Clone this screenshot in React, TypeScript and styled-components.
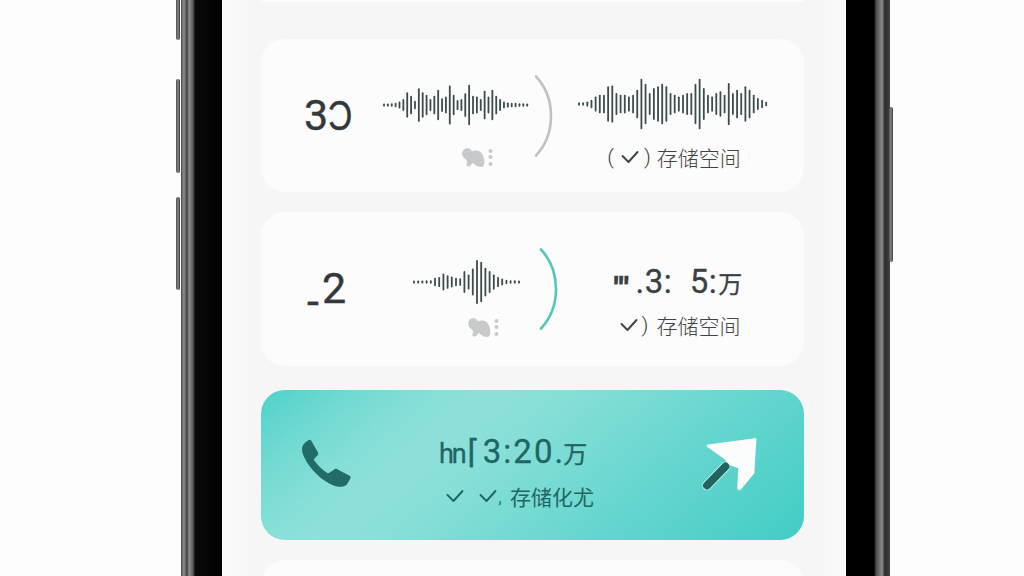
import React from "react";
import styled, { createGlobalStyle } from "styled-components";

const Global = createGlobalStyle`
  html, body { margin: 0; padding: 0; background: #fdfdfd; overflow: hidden; }
  #root { height: 576px; }
`;

const FONT = `Roboto, "Liberation Sans", "Noto Sans CJK SC", sans-serif`;
const CJK = `"Noto Sans CJK SC", "Noto Sans", sans-serif`;

const Page = styled.div`
  height: 576px;
  width: 1024px;
  padding-left: 181px;
  box-sizing: border-box;
  overflow: hidden;
`;

const Phone = styled.div`
  position: relative;
  width: 709px;
  height: 576px;
  box-sizing: border-box;
  padding: 0 44px 0 41px;
  background: linear-gradient(
    90deg,
    #3a3a3a 0,
    #6c6c6c 1px,
    #8c8c8c 3px,
    #3e3e3e 6px,
    #8e8e8e 8px,
    #5c5c5c 12px,
    #0a0a0a 14px,
    #000 40px,
    #000 calc(100% - 16px),
    #4a4a4a calc(100% - 14px),
    #8a8a8a calc(100% - 8px),
    #2a2a2a calc(100% - 5px),
    #444 100%
  );
`;

const SideKey = styled.div<{ $top: number; $h: number; $right?: boolean }>`
  position: absolute;
  top: ${(p) => p.$top}px;
  height: ${(p) => p.$h}px;
  width: 4px;
  ${(p) => (p.$right ? "right: -3px;" : "left: -5px;")}
  background: linear-gradient(90deg, #4a4a4a, #8a8a8a 50%, #333);
  border-radius: 2px;
`;

const Screen = styled.div`
  height: 100%;
  box-sizing: border-box;
  background: linear-gradient(90deg, #fbfbfb 0, #f6f6f7 30px, #f6f6f7 calc(100% - 30px), #fbfbfb 100%);
  padding: 0 42px 0 39px;
  display: flex;
  flex-direction: column;
  overflow: hidden;
`;

const Card = styled.div<{ $h: number; $mt: number; $pl?: number }>`
  flex: none;
  height: ${(p) => p.$h}px;
  margin-top: ${(p) => p.$mt}px;
  padding-left: ${(p) => p.$pl ?? 0}px;
  box-sizing: border-box;
  background: #fcfcfd;
  border-radius: 24px;
  display: flex;
  align-items: center;
`;

const StubCard = styled(Card)`
  border-radius: 0 0 24px 24px;
`;

const CallCard = styled(Card)`
  border-radius: 24px;
  background: linear-gradient(
    140deg,
    #4ed2ca 0%,
    #6fd9d1 12%,
    #86dfd8 24%,
    #8ee0da 32%,
    #88dfd8 42%,
    #78dbd4 55%,
    #62d5ce 72%,
    #42cdc5 100%
  );
`;

const Big = styled.div<{ $w: number }>`
  flex: none;
  width: ${(p) => p.$w}px;
  padding-bottom: 2px;
  font-family: ${FONT};
  font-size: 43px;
  font-weight: 400;
  line-height: 50px;
  color: #33383a;
  white-space: nowrap;
  -webkit-text-stroke: 0.4px #33383a;
`;

const Narrow = styled.span`
  display: inline-block;
  transform: scaleX(0.78);
  transform-origin: left center;
`;

const LowDash = styled.span`
  display: inline-block;
  transform: translateY(13px);
  margin-right: 3px;
`;

const Col = styled.div<{ $w: number; $ml?: number; $mt: number }>`
  flex: none;
  align-self: flex-start;
  width: ${(p) => p.$w}px;
  margin-left: ${(p) => p.$ml ?? 0}px;
  margin-top: ${(p) => p.$mt}px;
  display: flex;
  flex-direction: column;
  align-items: center;
`;

const LeftCol = styled(Col)`
  align-items: flex-start;
`;

const WaveSvg = styled.svg<{ $w: number }>`
  display: block;
  width: ${(p) => p.$w}px;
  height: 52px;
  flex: none;
`;

const BlobSvg = styled.svg<{ $mt: number; $ml: number }>`
  display: block;
  width: 32px;
  height: 22px;
  margin-top: ${(p) => p.$mt}px;
  margin-left: ${(p) => p.$ml}px;
`;

const ArcSvg = styled.svg<{ $ml: number }>`
  flex: none;
  display: block;
  width: 22px;
  height: 84px;
  margin-left: ${(p) => p.$ml}px;
`;

const Sub = styled.div<{ $mt: number; $light?: boolean; $ml?: number }>`
  margin-top: ${(p) => p.$mt}px;
  margin-left: ${(p) => p.$ml ?? 0}px;
  display: flex;
  align-items: center;
  font-family: ${CJK};
  font-size: 21px;
  font-weight: ${(p) => (p.$light ? 400 : 300)};
  line-height: 26px;
  color: ${(p) => (p.$light ? "#1f6662" : "#3f4445")};
  white-space: nowrap;
`;

const Paren = styled.span<{ $mr: number; $ml?: number }>`
  font-family: ${FONT};
  font-size: 21px;
  font-weight: 300;
  margin-right: ${(p) => p.$mr}px;
  margin-left: ${(p) => p.$ml ?? 0}px;
`;

const Tick = styled.svg<{ $mr: number }>`
  display: block;
  flex: none;
  width: 18px;
  height: 14px;
  margin-right: ${(p) => p.$mr}px;
`;

const Stat = styled.div`
  font-family: ${FONT};
  font-size: 33px;
  font-weight: 400;
  line-height: 36px;
  color: #3b4042;
  white-space: pre;
  letter-spacing: 0.5px;
  -webkit-text-stroke: 0.3px #3b4042;
`;

const Ticks = styled.span`
  display: inline-block;
  font-size: 30px;
  font-weight: 900;
  letter-spacing: 1px;
  transform: translateY(5px);
  margin-right: 6px;
`;

const Wan = styled.span<{ $s: number; $ml: number }>`
  font-family: ${CJK};
  font-size: ${(p) => p.$s}px;
  font-weight: 400;
  letter-spacing: 0;
  margin-left: ${(p) => p.$ml}px;
`;

const CallStat = styled.div`
  font-family: ${FONT};
  font-size: 33px;
  font-weight: 400;
  line-height: 36px;
  color: #1f6662;
  white-space: pre;
  letter-spacing: 2px;
  -webkit-text-stroke: 0.3px #1f6662;
`;

const Unit = styled.span`
  font-size: 27px;
  letter-spacing: -2px;
`;

const Stroke = styled.span`
  margin-left: 2px;
  margin-right: 3px;
  letter-spacing: 0;
`;

const CallSvg = styled.svg`
  flex: none;
  display: block;
  width: 50px;
  height: 48px;
  margin-top: -4px;
`;

const ArrowSvg = styled.svg`
  flex: none;
  display: block;
  width: 58px;
  height: 56px;
  margin-left: 106px;
`;

const Wave = ({ bars, step, w }: { bars: number[]; step: number; w: number }) => (
  <WaveSvg $w={w} viewBox={`0 0 ${w} 52`}>
    {bars.map((h, i) => {
      const x = 1 + i * step;
      const half = Math.max(h * 0.42, 0.7);
      return (
        <line
          key={i}
          x1={x}
          x2={x}
          y1={26 - half}
          y2={26 + half}
          stroke="#3d4b4c"
          strokeWidth={1.8}
          strokeLinecap="round"
        />
      );
    })}
  </WaveSvg>
);

const Blob = ({ mt, ml }: { mt: number; ml: number }) => (
  <BlobSvg $mt={mt} $ml={ml} viewBox="0 0 32 22" fill="#c7c9ca">
    <path d="M5 1.500c3-.8 5.500 1 6 3 2-1.500 6-1.500 8.500.5 3 2.500 4 7 3.800 10.500-.1 2.500-.8 4.500-3 4.500-3 0-6-1.500-8-4-1-.5-2.500 3.500-5 3.500-1.500 0-2.300-1.300-1.600-3 .5-1.300.4-2.700-.7-3.800C2 10.500 1 8.500 1.200 6 1.400 3.800 3 2 5 1.500z" />
    <circle cx="29.500" cy="4" r="2" />
    <circle cx="29.500" cy="10" r="2" />
    <circle cx="29.500" cy="17" r="2" />
  </BlobSvg>
);

const Arc = ({ color, ml }: { color: string; ml: number }) => (
  <ArcSvg $ml={ml} viewBox="0 0 22 84">
    <path
      d="M2 2.500C22 24 22 60 2 81.500"
      fill="none"
      stroke={color}
      strokeWidth={2.6}
      strokeLinecap="round"
    />
  </ArcSvg>
);

const Check = ({ mr, color = "#3d4345" }: { mr: number; color?: string }) => (
  <Tick $mr={mr} viewBox="0 0 18 14">
    <path d="M1.500 6l6 6L16.500 2" fill="none" stroke={color} strokeWidth={1.9} strokeLinecap="round" strokeLinejoin="round" />
  </Tick>
);

const waveA = [1, 1, 2, 3, 6, 12, 28, 20, 8, 38, 28, 22, 12, 20, 34, 14, 18, 44, 22, 10, 12, 26, 46, 20, 18, 12, 32, 18, 34, 20, 12, 6, 4, 3, 3, 2, 2, 1];
const waveB = [2, 2, 4, 8, 16, 20, 20, 40, 42, 24, 20, 20, 16, 20, 32, 58, 46, 24, 36, 40, 46, 40, 24, 20, 16, 20, 24, 24, 46, 58, 36, 20, 16, 24, 28, 20, 48, 24, 32, 24, 40, 32, 20, 12, 8, 3];
const waveC = [1, 1, 1, 2, 2, 8, 10, 18, 14, 11, 8, 7, 24, 16, 30, 50, 46, 32, 24, 16, 10, 6, 3, 2, 2, 1];

export default function App() {
  return (
    <Page>
      <Global />
      <Phone>
        <SideKey $top={-6} $h={46} />
        <SideKey $top={79} $h={94} />
        <SideKey $top={197} $h={93} />
        <SideKey $top={107} $h={155} $right />
        <Screen>
          <StubCard $h={2} $mt={0} />

          <Card $h={153} $mt={37} $pl={43}>
            <Big $w={79}>
              3<Narrow>Ɔ</Narrow>
            </Big>
            <Col $w={146} $mt={40}>
              <Wave bars={waveA} step={3.87} w={146} />
              <Blob mt={16} ml={42} />
            </Col>
            <Arc color="#bfc2c3" ml={5} />
            <Col $w={192} $ml={22} $mt={39}>
              <Wave bars={waveB} step={4.16} w={192} />
              <Sub $mt={14}>
                <Paren $mr={7}>(</Paren>
                <Check mr={5} />
                <Paren $mr={6}>)</Paren>
                存储空间
              </Sub>
            </Col>
          </Card>

          <Card $h={154} $mt={20} $pl={46}>
            <Big $w={106}>
              <LowDash>-</LowDash>2
            </Big>
            <Col $w={109} $mt={44}>
              <Wave bars={waveC} step={4.2} w={109} />
              <Blob mt={9} ml={30} />
            </Col>
            <Arc color="#4fc9b8" ml={17} />
            <Col $w={128} $ml={53} $mt={52}>
              <Stat>
                <Ticks>'''</Ticks>.3:  5:<Wan $s={24} $ml={1}>万</Wan>
              </Stat>
              <Sub $mt={11} $ml={4}>
                <Check mr={4} />
                <Paren $mr={8}>)</Paren>
                存储空间
              </Sub>
            </Col>
          </Card>

          <CallCard $h={150} $mt={24} $pl={40}>
            <CallSvg viewBox="0 0 50 48">
              <path
                d="M7.500 1.200c1-.7 2.200-.4 2.800.6l6.700 11.700c.5.900.3 2-.4 2.700l-3.300 3.600c-.5.600-.4 1.200 0 1.800 3.400 5 7.700 9.200 13 12.300.7.400 1.400.4 2-.1l5.300-3.500c.8-.5 1.700-.6 2.600-.1l12.400 6.500c1.100.6 1.300 1.700.7 2.800l-3 5.200c-.8 1.300-2.200 2.200-4.200 2.700-2.800.7-6.200.5-9.500-.8C21 42 8.500 30 2.900 17.500 1.300 14 .7 10.800 1.300 8.300 1.800 5.600 4 3 7.500 1.200z"
                fill="#236b66"
              />
            </CallSvg>
            <LeftCol $w={156} $ml={88} $mt={44}>
              <CallStat>
                <Unit>hn</Unit>
                <Stroke>⌈</Stroke>3:20.<Wan $s={24} $ml={-2}>万</Wan>
              </CallStat>
              <Sub $mt={11} $light $ml={7}>
                <Check mr={15} color="#1f6662" />
                <Check mr={1} color="#1f6662" />
                <Paren $mr={8}>,</Paren>
                存储化尤
              </Sub>
            </LeftCol>
            <ArrowSvg viewBox="0 0 58 56">
              <path d="M7 7.500L54 1.300c1-.1 1.500.4 1.400 1.300L53.300 36.300 40 52.500c-1.500 1.500-3.800.5-3.800-1.500l1.100-19.700-9-3.300-5-6-8.300-5.700L6.500 10c-1.500-.7-1-2.300.5-2.500z" fill="#fbfdfd" />
              <line x1="24.500" y1="29.500" x2="6" y2="48.500" stroke="#e7f7f5" strokeWidth={9.500} strokeLinecap="round" />
              <line x1="24.500" y1="29.500" x2="6" y2="48.500" stroke="#1f6662" strokeWidth={8} strokeLinecap="round" />
            </ArrowSvg>
          </CallCard>

          <Card $h={60} $mt={20} />
        </Screen>
      </Phone>
    </Page>
  );
}
